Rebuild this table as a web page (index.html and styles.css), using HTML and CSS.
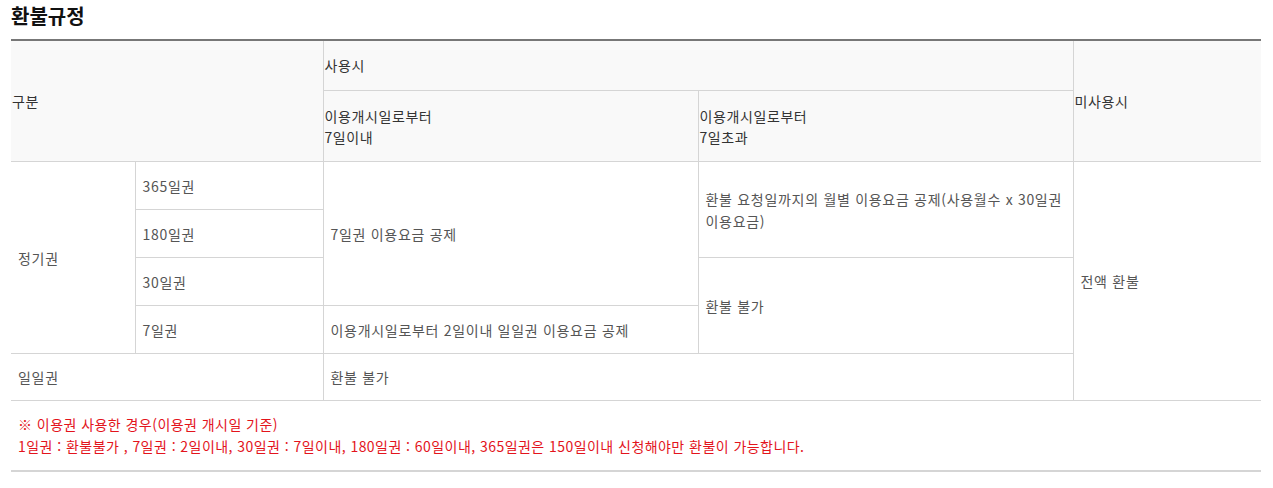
FILE: index.html
```html
<!DOCTYPE html>
<html lang="ko">
<head>
<meta charset="utf-8">
<title>환불규정</title>
<link rel="stylesheet" href="styles.css">
</head>
<body>
<div class="page">
  <h2 class="title">환불규정</h2>
  <table class="refund">
    <colgroup>
      <col class="c1"><col class="c2"><col class="c3"><col class="c4"><col class="c5">
    </colgroup>
    <thead>
      <tr class="h1">
        <th colspan="2" rowspan="2">구분</th>
        <th colspan="2">사용시</th>
        <th rowspan="2" class="last">미사용시</th>
      </tr>
      <tr class="h2">
        <th>이용개시일로부터<br>7일이내</th>
        <th>이용개시일로부터<br>7일초과</th>
      </tr>
    </thead>
    <tbody>
      <tr>
        <td rowspan="4" class="first">정기권</td>
        <td>365일권</td>
        <td rowspan="3">7일권 이용요금 공제</td>
        <td rowspan="2">환불 요청일까지의 월별 이용요금 공제(사용월수 x 30일권 이용요금)</td>
        <td rowspan="5" class="last">전액 환불</td>
      </tr>
      <tr><td>180일권</td></tr>
      <tr>
        <td>30일권</td>
        <td rowspan="2">환불 불가</td>
      </tr>
      <tr>
        <td>7일권</td>
        <td>이용개시일로부터 2일이내 일일권 이용요금 공제</td>
      </tr>
      <tr class="end">
        <td colspan="2" class="first">일일권</td>
        <td colspan="2">환불 불가</td>
      </tr>
    </tbody>
  </table>
  <div class="note">
    <p>※ 이용권 사용한 경우(이용권 개시일 기준)</p>
    <p>1일권 : 환불불가 , 7일권 : 2일이내, 30일권 : 7일이내, 180일권 : 60일이내, 365일권은 150일이내 신청해야만 환불이 가능합니다.</p>
  </div>
</div>
</body>
</html>
```

FILE: styles.css
```css
html, body {
  margin: 0;
  padding: 0;
  background: #fff;
}

body {
  font-family: "Noto Sans CJK KR", "Noto Sans", sans-serif;
  font-size: 14px;
  color: #555;
}

.page {
  padding: 0 12px 0 11px;
  width: 1250px;
}

.title {
  margin: 0;
  padding: 2px 0 9px;
  font-size: 20px;
  line-height: 28px;
  font-weight: 700;
  color: #111;
}

.refund {
  width: 1250px;
  table-layout: fixed;
  border-collapse: collapse;
  border-top: 2px solid #777;
  word-break: keep-all;
}

.c1 { width: 124px; }
.c2 { width: 188px; }
.c3 { width: 375px; }
.c4 { width: 375px; }
.c5 { width: 188px; }

.refund th,
.refund td {
  border: 1px solid #d5d5d5;
  vertical-align: middle;
  text-align: left;
}

.refund th {
  background: #f9f9f9;
  font-weight: 400;
  color: #333;
  padding: 0 1px;
  line-height: 21px;
  letter-spacing: 0.6px;
}

.refund th:first-child,
.refund td.first {
  border-left: none;
}

.refund .last {
  border-right: none;
}

.refund tr.h1 th {
  height: 49px;
}

.refund tr.h2 th {
  height: 69px;
  padding-top: 1px;
}

.refund td {
  height: 47px;
  padding: 0 7px;
  line-height: 22px;
  letter-spacing: 0.7px;
}

.refund tr.end td {
  height: 46px;
}

.note {
  padding: 12px 7px 13px;
  border-bottom: 2px solid #d5d5d5;
  color: #e3141c;
  font-size: 14px;
  line-height: 22px;
  letter-spacing: 0.45px;
}

.note p {
  margin: 0;
}
```
